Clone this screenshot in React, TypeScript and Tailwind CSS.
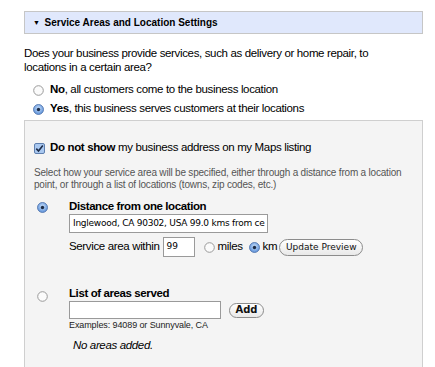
import React from "react"

const Radio = ({checked}: {checked?: boolean}) =>
    checked ? (
        <svg width="11" height="11" viewBox="0 0 11 11" className="shrink-0">
            <defs>
                <radialGradient id="rb" cx="50%" cy="40%" r="60%">
                    <stop offset="0%" stopColor="#c9e0fb" />
                    <stop offset="100%" stopColor="#5a8fd8" />
                </radialGradient>
            </defs>
            <circle cx="5.5" cy="5.5" r="5" fill="url(#rb)" stroke="#4a6ea8" strokeWidth="0.8" />
            <circle cx="5.5" cy="5.5" r="1.7" fill="#1b2a44" />
        </svg>
    ) : (
        <svg width="11" height="11" viewBox="0 0 11 11" className="shrink-0">
            <circle cx="5.5" cy="5.5" r="4.8" fill="#fbfbfb" stroke="#9a9a9a" strokeWidth="1" />
        </svg>
    )

const Checkbox = () => (
    <svg width="11" height="11" viewBox="0 0 11 11" className="shrink-0">
        <rect x="0.5" y="0.5" width="10" height="10" rx="1.5" fill="#a9c8f0" stroke="#5f7fae" />
        <path d="M2.3 5.6 L4.5 8 L8.8 2.4" fill="none" stroke="#1d2c48" strokeWidth="1.6" />
    </svg>
)

const MacButton = ({label, className}: {label: string; className: string}) => (
    <button
        className={`rounded-full border border-[#8c8c8c] bg-gradient-to-b from-white to-[#e9e9e9] font-['DejaVu_Sans',sans-serif] text-[#111] leading-none ${className}`}
    >
        {label}
    </button>
)

export default function App() {
    return (
        <div className="flex h-[367px] w-[435px] flex-col overflow-hidden bg-white pl-[24px] pr-[12px] font-['Liberation_Sans',Arial,sans-serif] text-[11.5px] tracking-[-0.35px] text-black">
            <div className="mt-[11px] flex h-[23px] shrink-0 items-center border border-[#c6c6c6] bg-[#e0e8fc] pl-[8px]">
                <span className="mr-[5px] text-[7px] leading-none">▼</span>
                <span className="text-[10px] font-bold tracking-[0px]">Service Areas and Location Settings</span>
            </div>

            <p className="mt-[12px] leading-[14px]">
                Does your business provide services, such as delivery or home repair, to
                <br />
                locations in a certain area?
            </p>

            <div className="mt-[9px] flex flex-col gap-[5px] pl-[9px]">
                <label className="flex h-[14px] items-center gap-[6px]">
                    <Radio />
                    <span><b>No</b>, all customers come to the business location</span>
                </label>
                <label className="flex h-[14px] items-center gap-[6px]">
                    <Radio checked />
                    <span><b>Yes</b>, this business serves customers at their locations</span>
                </label>
            </div>

            <div className="mt-[4px] flex-1 border-x border-t border-[#cfcfcf] bg-[#f4f4f4] pl-[9px]">
                <label className="mt-[20px] flex h-[14px] items-center gap-[5px]">
                    <Checkbox />
                    <span><b>Do not show</b> my business address on my Maps listing</span>
                </label>

                <p className="mt-[12px] text-[10px] leading-[12px] tracking-[-0.2px] text-[#555]">
                    Select how your service area will be specified, either through a distance from a location
                    <br />
                    point, or through a list of locations (towns, zip codes, etc.)
                </p>

                <div className="mt-[8px] flex">
                    <div className="w-[35px] pl-[3px] pt-[3px]">
                        <Radio checked />
                    </div>
                    <div className="flex flex-col">
                        <div className="h-[15px] font-bold leading-[15px] tracking-[-0.4px]">Distance from one location</div>
                        <div className="flex h-[19px] w-[199px] items-center overflow-hidden whitespace-nowrap border border-[#9a9a9a] bg-white px-[3px] font-['DejaVu_Sans',sans-serif] text-[9px] tracking-[-0.25px]">
                            Inglewood, CA 90302, USA 99.0 kms from ce
                        </div>
                        <div className="mt-[4px] flex h-[20px] items-center">
                            <span>Service area within</span>
                            <div className="ml-[3px] flex h-[20px] w-[32px] items-center border border-[#9a9a9a] bg-white px-[3px] font-['DejaVu_Sans',sans-serif] text-[9px] tracking-[0px]">
                                99
                            </div>
                            <span className="ml-[9px]"><Radio /></span>
                            <span className="ml-[3px]">miles</span>
                            <span className="ml-[6px]"><Radio checked /></span>
                            <span className="ml-[3px]">km</span>
                            <MacButton label="Update Preview" className="ml-[2px] h-[17px] w-[84px] text-[9px] tracking-[0px]" />
                        </div>
                    </div>
                </div>

                <div className="mt-[29px] flex">
                    <div className="w-[35px] pl-[3px] pt-[5px]">
                        <Radio />
                    </div>
                    <div className="flex flex-col">
                        <div className="h-[15px] font-bold leading-[15px] tracking-[-0.4px]">List of areas served</div>
                        <div className="flex items-center">
                            <div className="h-[18px] w-[152px] border border-[#9a9a9a] bg-white" />
                            <MacButton label="Add" className="ml-[8px] h-[15px] w-[35px] text-[10px] font-bold tracking-[0px]" />
                        </div>
                        <div className="mt-[1px] text-[9px] leading-[10px] tracking-[-0.1px] text-[#222]">Examples: 94089 or Sunnyvale, CA</div>
                        <div className="mt-[7px] pl-[4px] italic">No areas added.</div>
                    </div>
                </div>
            </div>
        </div>
    )
}
